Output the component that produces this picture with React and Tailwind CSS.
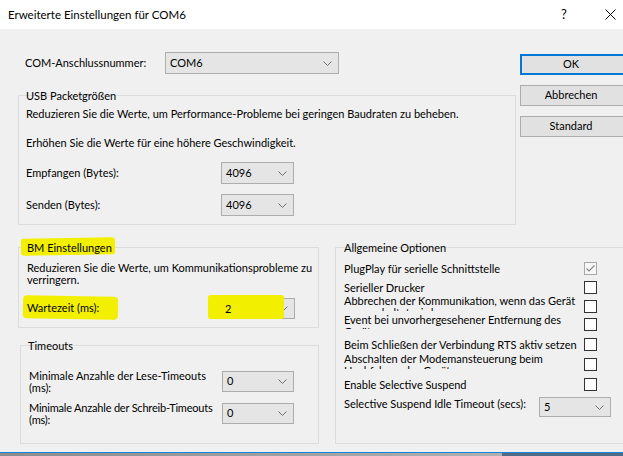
import React from "react";

const font = { fontFamily: "Lato, 'Noto Sans', sans-serif" };

const Chevron = () => (
  <svg width="9" height="5" viewBox="0 0 9 5" className="shrink-0">
    <path d="M0.5 0.5 L4.5 4.5 L8.5 0.5" fill="none" stroke="#707070" strokeWidth="1" />
  </svg>
);

const Select = ({ value, className = "" }) => (
  <div
    className={`relative flex items-center justify-between bg-[#e5e5e5] border border-[#adadad] pl-[4px] pr-[6px] ${className}`}
  >
    <span className="relative z-10 text-black">{value}</span>
    <Chevron />
  </div>
);

const Button = ({ children, primary }) => (
  <div
    className={`w-[110px] h-[21px] flex items-center justify-center bg-[#e1e1e1] pr-[8px] ${
      primary ? "border-2 border-[#0078d7]" : "border border-[#adadad]"
    }`}
  >
    {children}
  </div>
);

const Group = ({ title, className = "", children, legendClass = "left-[6px]" }) => (
  <div className={`relative border border-[#dcdcdc] ${className}`}>
    <span className={`absolute -top-[8px] ${legendClass} z-10 px-[1px] leading-[15px]`}>
      {title}
    </span>
    {children}
  </div>
);

const Check = ({ checked }) =>
  checked ? (
    <div className="w-[13px] h-[13px] border border-[#a8a8a8] bg-[#f7f7f7] flex items-center justify-center shrink-0">
      <svg width="9" height="7" viewBox="0 0 9 7">
        <path d="M0.5 3.5 L3 6 L8.5 0.5" fill="none" stroke="#8a8a8a" strokeWidth="1.2" />
      </svg>
    </div>
  ) : (
    <div className="w-[13px] h-[13px] border border-[#333333] bg-white shrink-0" />
  );

const Option = ({ label, checked, h, mt = "", clip, inner = "" }) => (
  <div className={`flex items-center justify-between pr-[27px] ${h} ${mt}`}>
    {clip ? (
      <div className="self-start h-[14px] overflow-hidden">
        <div className={`leading-[12px] w-[240px] ${inner}`}>{label}</div>
      </div>
    ) : (
      <span className="leading-[15px]">{label}</span>
    )}
    <Check checked={checked} />
  </div>
);

export default function App() {
  return (
    <div
      className="w-[623px] h-[456px] overflow-hidden bg-[#f0f0f0] flex flex-col text-[11px] text-black"
      style={font}
    >
      {/* title bar */}
      <div className="h-[29px] bg-white flex items-center shrink-0">
        <span className="pl-[8px] flex-1 text-[11.5px]">Erweiterte Einstellungen für COM6</span>
        <span className="w-[10px] text-[13px] mr-[34px]">?</span>
        <svg width="11" height="11" viewBox="0 0 11 11" className="mr-[7px]">
          <path d="M0.5 0.5 L10.5 10.5 M10.5 0.5 L0.5 10.5" stroke="#000" strokeWidth="1" />
        </svg>
      </div>

      {/* body */}
      <div className="flex-1 flex flex-col pl-[18px]">
        <div className="flex">
          <div className="w-[498px] shrink-0 pt-[23px]">
            <div className="h-[22px] flex items-center">
              <span className="w-[147px] pl-[7px]">COM-Anschlussnummer:</span>
              <Select value="COM6" className="w-[174px] h-[22px]" />
            </div>

            <Group title="USB Packetgrößen" className="mt-[21px] h-[130px] pl-[7px]">
              <p className="pt-[10px] leading-[16px]">
                Reduzieren Sie die Werte, um Performance-Probleme bei geringen Baudraten zu beheben.
              </p>
              <p className="mt-[13px] leading-[16px]">
                Erhöhen Sie die Werte für eine höhere Geschwindigkeit.
              </p>
              <div className="mt-[11px] h-[22px] flex items-center">
                <span className="w-[195px]">Empfangen (Bytes):</span>
                <Select value="4096" className="w-[73px] h-[22px]" />
              </div>
              <div className="mt-[10px] h-[22px] flex items-center">
                <span className="w-[195px]">Senden (Bytes):</span>
                <Select value="4096" className="w-[73px] h-[22px]" />
              </div>
            </Group>
          </div>

          <div className="pl-[4px] pt-[25px] flex flex-col gap-[10px]">
            <Button primary>OK</Button>
            <Button>Abbrechen</Button>
            <Button>Standard</Button>
          </div>
        </div>

        <div className="mt-[22px] flex">
          <div className="w-[301px] shrink-0">
            <Group
              title="BM Einstellungen"
              className="h-[81px] pl-[8px]"
              legendClass="left-[7px]"
            >
              {/* marker highlights */}
              <div className="absolute left-[2px] -top-[10px] w-[94px] h-[17px] bg-[#f2ef00] rounded-[3px] -rotate-[1deg]" />
              <div className="absolute left-[4px] top-[48px] w-[95px] h-[23px] bg-[#f2ef00] rounded-[4px] rotate-[1deg]" />
              <p className="pt-[14px] leading-[12px] whitespace-nowrap">
                Reduzieren Sie die Werte, um Kommunikationsprobleme zu
                <br />
                verringern.
              </p>
              <div className="mt-[12px] h-[21px] flex items-center">
                <span className="w-[195px] relative z-10">Wartezeit (ms):</span>
                <div className="relative">
                  <Select value="" className="w-[73px] h-[21px]" />
                  <div className="absolute -left-[14px] -top-[3px] w-[76px] h-[24px] bg-[#f2ef00] rounded-[3px]" />
                  <span className="absolute left-[3px] top-[3px] z-10 leading-[15px]">2</span>
                </div>
              </div>
            </Group>

            <Group title="Timeouts" className="mt-[17px] ml-[2px] h-[99px] pl-[8px]">
              <div className="mt-[25px] h-[21px] flex items-center">
                <span className="w-[190px] mr-[3px] leading-[12px] whitespace-nowrap">
                  Minimale Anzahle der Lese-Timeouts
                  <br />
                  (ms):
                </span>
                <Select value="0" className="w-[72px] h-[21px]" />
              </div>
              <div className="mt-[11px] h-[21px] flex items-center">
                <span className="w-[190px] mr-[3px] leading-[12px] whitespace-nowrap tracking-[-0.2px]">
                  Minimale Anzahle der Schreib-Timeouts
                  <br />
                  (ms):
                </span>
                <Select value="0" className="w-[72px] h-[21px]" />
              </div>
            </Group>
          </div>

          <Group
            title="Allgemeine Optionen"
            className="ml-[16px] w-[300px] h-[197px] pl-[8px]"
            legendClass="left-[7px]"
          >
            <div className="pt-[11px] flex flex-col">
              <Option label="PlugPlay für serielle Schnittstelle" checked h="h-[19px]" />
              <Option label="Serieller Drucker" h="h-[19px]" />
              <Option
                label="Abbrechen der Kommunikation, wenn das Gerät ausgeschaltet wird"
                h="h-[18px]"
                clip
                inner="-mt-[2px]"
              />
              <Option
                label="Event bei unvorhergesehener Entfernung des Geräts"
                h="h-[18px]"
                clip
                inner="-mt-[1px]"
              />
              <Option label="Beim Schließen der Verbindung RTS aktiv setzen" h="h-[21px]" mt="mt-[1px]" />
              <Option
                label="Abschalten der Modemansteuerung beim Hochfahren des Geräts"
                h="h-[18px]"
                clip
                inner="-mt-[2px]"
              />
              <Option label="Enable Selective Suspend" h="h-[22px]" />
              <div className="mt-[2px] h-[20px] flex items-start">
                <span className="w-[195px] leading-[14px]">
                  Selective Suspend Idle Timeout (secs):
                </span>
                <Select value="5" className="w-[72px] h-[20px]" />
              </div>
            </div>
          </Group>
        </div>
      </div>

      <div className="h-px bg-[#1883d7] shrink-0" />
      <div className="h-[3px] shrink-0 flex">
        <div className="flex-1 bg-gradient-to-r from-[#8c8c8c] to-[#b0b0b0]" />
        <div className="w-[121px] bg-[#4e6a86]" />
      </div>
    </div>
  );
}
